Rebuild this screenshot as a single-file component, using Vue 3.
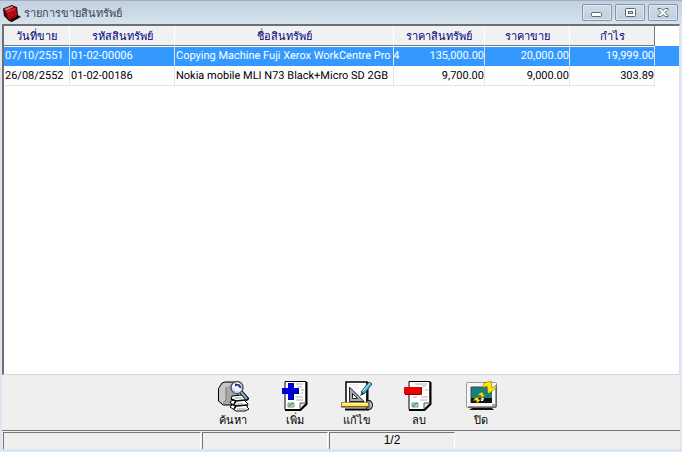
<script setup>
import { ref } from 'vue'

const headers = ['วันที่ขาย', 'รหัสสินทรัพย์', 'ชื่อสินทรัพย์', 'ราคาสินทรัพย์', 'ราคาขาย', 'กำไร']
const rows = [
  ['07/10/2551', '01-02-00006', 'Copying Machine Fuji Xerox WorkCentre Pro 4', '135,000.00', '20,000.00', '19,999.00'],
  ['26/08/2552', '01-02-00186', 'Nokia mobile MLI N73 Black+Micro SD 2GB', '9,700.00', '9,000.00', '303.89']
]
const selected = ref(0)
</script>

<template>
  <main class="window">
    <header class="titlebar">
      <svg class="logo" viewBox="0 0 18 18" aria-hidden="true">
        <path d="M0 4.500 9 1l2 1 3 1 1 8 3 2-2 1-7 4-3-1-5-5z" fill="#1c0606" />
        <path d="M1 5 9 2l2 1-8 4z" fill="#d77a78" />
        <path d="M1 5l2 2 3 9-4-4z" fill="#6c0208" />
        <path d="M3 7l10-4 1 9-8 4z" fill="#b80b18" />
        <path d="M4 8l8-3.500" stroke="#ee4a4e" />
        <path d="M7 14l7-3" stroke="#84040c" />
      </svg>
      <h1>รายการขายสินทรัพย์</h1>
      <div class="controls">
        <button type="button" aria-label="Minimize">
          <svg viewBox="0 0 14 12"><rect x="1.500" y="5.500" width="10" height="4" rx="1" fill="#fff" stroke="#5d6671" /></svg>
        </button>
        <button type="button" aria-label="Maximize">
          <svg viewBox="0 0 14 12"><rect x="2.500" y="1.500" width="10" height="8" rx="1" fill="#fff" stroke="#5d6671" /><rect x="5.500" y="4.500" width="4" height="2" fill="#ccd8e6" stroke="#5d6671" /></svg>
        </button>
        <button type="button" aria-label="Close">
          <svg viewBox="0 0 14 12"><path d="M2 1.500h3l2 2 2-2h3v1L9 5.500l3 3v1H9l-2-2-2 2H2v-1l3-3-3-3z" fill="#fff" stroke="#5d6671" /></svg>
        </button>
      </div>
    </header>

    <section class="client">
      <div class="list">
        <table>
          <colgroup>
            <col class="c-date" /><col class="c-code" /><col class="c-name" />
            <col class="c-price" /><col class="c-sale" /><col class="c-profit" /><col />
          </colgroup>
          <thead>
            <tr>
              <th v-for="h in headers" :key="h" scope="col">{{ h }}</th>
              <td class="blank"></td>
            </tr>
          </thead>
          <tbody>
            <tr v-for="(row, r) in rows" :key="r" :class="{ selected: r === selected }" @click="selected = r">
              <td v-for="(cell, c) in row" :key="c" :class="{ num: c > 2 }">{{ cell }}</td>
              <td class="blank"></td>
            </tr>
          </tbody>
        </table>
      </div>

      <nav class="toolbar">
        <button type="button">
          <svg viewBox="0 0 32 32" aria-hidden="true">
            <path d="M1.500 8.500 5 3l3-1h10l3 3v17l-5 3H6l-4.500-4z" fill="#a8a8a8" stroke="#000" />
            <path d="M6 3h10l-4 3-3 2v12l-4 3-3-3V9z" fill="#c6c6c6" />
            <path d="M9 7v13l-3 3" stroke="#777" fill="none" />
            <path d="M15 16l10-1 4 4-1 2 3 3-1 3 2 2-4 2H19l-6-4 2-2-2-3 3-2-2-2z" fill="#fff" stroke="#000" />
            <path d="M14 19l5 2 9-1M14 24l5 2 11-1M19 21l-2 3M19 26l-2 3" fill="none" stroke="#000" stroke-width="1.500" />
            <path d="M19 24h7M20 29h9M18 18h7" stroke="#999" />
            <circle cx="20" cy="7.500" r="6" fill="#f4f7ff" stroke="#555568" stroke-width="1.500" />
            <path d="M18 3.500l5 1 2 4-3-1-1-2-3 1z" fill="#2d318e" />
            <path d="M16 8l2 4h4" fill="none" stroke="#c2d2e8" stroke-width="1.500" />
            <path d="M24 12l7 8" stroke="#000" stroke-width="4" />
            <path d="M24 12l6 7" stroke="#83bccc" stroke-width="2" />
          </svg>
          <span>ค้นหา</span>
        </button>
        <button type="button">
          <svg viewBox="0 0 32 32" aria-hidden="true">
            <path d="M6 1.500h21v22l-6 6H6z" fill="#fff" stroke="#000" />
            <path d="M27.500 2v22l-6 6H6" fill="none" stroke="#000" stroke-width="2" />
            <path d="M21 29v-6h6z" fill="#e6e6e6" stroke="#555" />
            <path d="M17 4h7M18 7h5M22 10h3M22 13h2M17 17h7M17 20h7" stroke="#b0b0b0" />
            <path d="M9 23h6v4H9z" fill="#b9d8c2" stroke="#63a575" /><path d="M10 26l4-3" stroke="#287b52" />
            <path d="M9 3h6v5h5v6h-5v6H9v-6H3V8h6z" fill="#0000d8" />
            <path d="M14.500 3v5.500h5v5h-5v6H9" fill="none" stroke="#00008c" />
          </svg>
          <span>เพิ่ม</span>
        </button>
        <button type="button">
          <svg viewBox="0 0 32 32" aria-hidden="true">
            <path d="M5 2h21v22H5z" fill="#fff" stroke="#000" stroke-width="1.500" />
            <path d="M26.500 2v22" stroke="#000" stroke-width="2" />
            <path d="M8 5h10M13 8h5" stroke="#ddd" />
            <path d="M8.500 7v14.500H23z" fill="#a8a8b0" stroke="#222" />
            <path d="M11.500 13.500v5h5z" fill="#fff" stroke="#222" />
            <path d="M20 12l8-10 3 2-8 10z" fill="#55b8d2" stroke="#16505f" />
            <path d="M22 11l7-8" stroke="#c1f2f5" /><path d="M19 16l2-4 2 2z" fill="#222" />
            <path d="M4 29.500h24" stroke="#000" stroke-width="2" />
            <path d="M26 20l4 1 2 4-2 4-4 1z" fill="#b8b8b8" stroke="#000" />
            <path d="M.5 22.500h27v4H.5z" fill="#ffe76d" stroke="#ad8419" />
            <path d="M2 23.500h24" stroke="#fffbd0" /><path d="M0 27h28" stroke="#554000" />
            <path d="M28 21v8" stroke="#555" />
          </svg>
          <span>แก้ไข</span>
        </button>
        <button type="button">
          <svg viewBox="0 0 32 32" aria-hidden="true">
            <path d="M6 1.500h21v22l-6 6H6z" fill="#fff" stroke="#000" />
            <path d="M27.500 2v22l-6 6H6" fill="none" stroke="#000" stroke-width="2" />
            <path d="M21 29v-6h6z" fill="#e6e6e6" stroke="#555" />
            <path d="M12 4h12M19 6h4M22 10h3M18 17h7M10 17h4M17 20h7" stroke="#b0b0b0" />
            <path d="M9 23h6v4H9z" fill="#b9d8c2" stroke="#63a575" /><path d="M10 26l4-3" stroke="#287b52" />
            <path d="M1 7h18v7H1z" fill="#ef0000" />
            <path d="M18.500 7v7.500H2" fill="none" stroke="#8c0000" />
          </svg>
          <span>ลบ</span>
        </button>
        <button type="button">
          <svg viewBox="0 0 32 32" aria-hidden="true">
            <rect x="1.500" y="2.500" width="30" height="25" rx="1" fill="#f7f7f7" stroke="#999" />
            <path d="M31 5v22H3" fill="none" stroke="#333" />
            <path d="M6 7h21v16H6z" fill="#178080" />
            <path d="M6 23V7h21" fill="none" stroke="#444" />
            <path d="M6 18h21v5H6z" fill="#111" />
            <path d="M16 18h3l-1 3h-2z" fill="#fff" />
            <path d="M27 25h3" stroke="#00a000" />
            <path d="M7 28h20l2 2H4z" fill="#111" />
            <path d="M19 3l7-2 1 7 5-3-1 3-8 6-1-8-4 2z" fill="#ffe600" stroke="#6b5a00" stroke-width=".5" />
            <path d="M14.500 13l3-1 1 3 3-1-5 4-1-3-3 1zM10 18l3-1 1 3 3-1-5 4-1-3-3 1z" fill="#ffe600" stroke="#6b5a00" stroke-width=".5" />
          </svg>
          <span>ปิด</span>
        </button>
      </nav>

      <footer class="statusbar">
        <div class="pane first"></div>
        <div class="pane"></div>
        <div class="pane">1/2</div>
      </footer>
    </section>
  </main>
</template>

<style>
body {
  margin: 0;
}
</style>

<style scoped>
* {
  box-sizing: border-box;
}
.window {
  display: flex;
  flex-direction: column;
  min-height: 100vh;
  padding: 0 2px 3px;
  background: #dbe6f2;
  font-family: "Liberation Sans", "Noto Sans", sans-serif;
  font-size: 11px;
  color: #000;
}
.titlebar {
  display: flex;
  align-items: center;
  height: 24px;
  margin: 0 -2px;
  padding: 0 4px 0 3px;
  background: linear-gradient(#c2d0df, #d5e2ef);
  border-top: 1px solid #a5b0bc;
}
.logo {
  width: 18px;
  height: 18px;
}
h1 {
  flex: 1;
  margin: 0 0 0 3px;
  font-size: 11px;
  font-weight: 400;
  line-height: 20px;
  color: #3c444d;
}
.controls {
  display: flex;
  gap: 3px;
}
.controls button {
  display: flex;
  align-items: center;
  justify-content: center;
  width: 30px;
  height: 17px;
  padding: 0;
  background: linear-gradient(#d0dbe7, #c0cfdf);
  border: 1px solid #8796a7;
  border-radius: 2px;
  box-shadow: inset 0 0 0 1px #dfe8f1;
}
.controls svg {
  width: 14px;
  height: 12px;
}
.client {
  flex: 1;
  display: flex;
  flex-direction: column;
  background: #efefef;
}
.list {
  flex: 1;
  overflow: hidden;
  background: #fff;
  border: solid;
  border-width: 2px 1px 1px 2px;
  border-color: #707070 #dfe4e8 #d4d8d8 #707070;
}
table {
  width: 100%;
  table-layout: fixed;
  border-collapse: separate;
  border-spacing: 0;
}
.c-date { width: 66px; }
.c-code { width: 105px; }
.c-name { width: 219px; }
.c-price { width: 91px; }
.c-sale { width: 85px; }
.c-profit { width: 85px; }
th,
td {
  height: 20px;
  padding: 0;
  white-space: nowrap;
  line-height: 18px;
  border-right: 1px solid #e4e4e4;
  border-bottom: 1px solid #e4e4e4;
}
td {
  padding-left: 1px;
  font-family: Roboto, "Liberation Sans", sans-serif;
  font-size: 11px;
  text-align: left;
  text-rendering: geometricPrecision;
}
th {
  background: #f1f1f1;
  border-right-color: #fff;
  border-bottom-color: #777;
  font-size: 11px;
  font-weight: 400;
  color: #000080;
}
th:nth-child(6) {
  border-right-color: #777;
}
.num {
  text-align: right;
}
.selected td {
  background: #3399ff;
  border-top: 1px solid #fff;
  border-bottom-color: #3399ff;
  color: #fff;
}
.blank,
.selected .blank {
  border: 0;
}
.toolbar {
  display: flex;
  justify-content: center;
  height: 56px;
  padding: 5px 0 0 31px;
  border-bottom: 1px solid #777;
}
.toolbar button {
  display: flex;
  flex-direction: column;
  align-items: center;
  width: 62px;
  padding: 0;
  background: none;
  border: 0;
  font: inherit;
  line-height: 16px;
  color: #000;
}
.toolbar svg {
  width: 32px;
  height: 32px;
}
.statusbar {
  display: flex;
  gap: 1px;
  padding: 1px 0 0 1px;
}
.pane {
  width: 126px;
  height: 17px;
  border: solid;
  border-width: 1px 1px 0 1px;
  border-color: #777 #fff #fff #777;
  font-size: 12px;
  line-height: 15px;
  text-align: center;
}
.first {
  width: 198px;
}
</style>
